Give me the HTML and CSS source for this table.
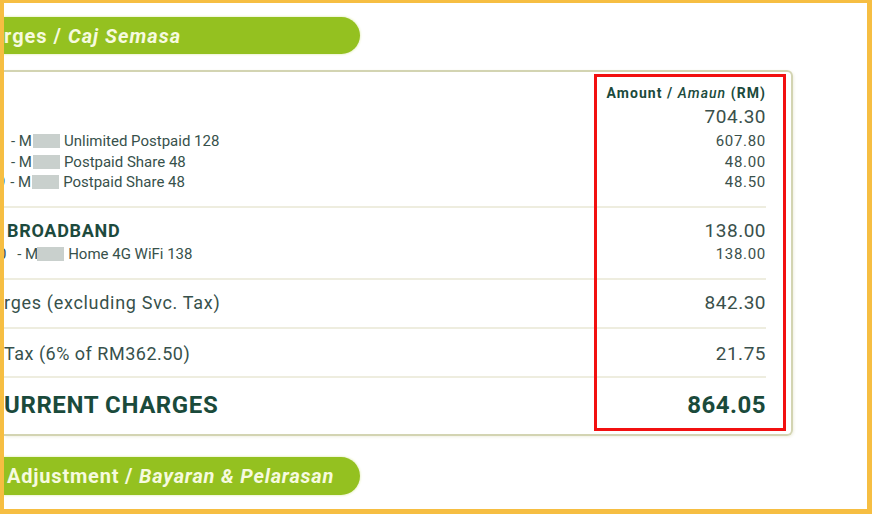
FILE: index.html
```html
<!DOCTYPE html>
<html>
<head>
<meta charset="utf-8">
<link rel="stylesheet" href="styles.css">
</head>
<body>
<div class="frame">
  <div class="pill pill-top"><span class="pill-text">rges / <em>Caj Semasa</em></span></div>
  <div class="card">
    <section class="sec sec1">
      <div class="row hdr"><span class="lbl"></span><span class="amt">Amount / <em>Amaun</em> (RM)</span></div>
      <div class="row main"><span class="lbl"></span><span class="amt big">704.30</span></div>
      <div class="row item"><span class="lbl"><span class="pre">- M</span><i class="redact"></i>Unlimited Postpaid 128</span><span class="amt">607.80</span></div>
      <div class="row item"><span class="lbl"><span class="pre">- M</span><i class="redact"></i>Postpaid Share 48</span><span class="amt">48.00</span></div>
      <div class="row item"><span class="lbl"><span class="pre"><span class="cut">9</span> - M</span><i class="redact"></i>Postpaid Share 48</span><span class="amt">48.50</span></div>
    </section>
    <div class="rule"></div>
    <section class="sec sec2">
      <div class="row main"><span class="lbl title">BROADBAND</span><span class="amt big">138.00</span></div>
      <div class="row item"><span class="lbl"><span class="pre"><span class="cut">0</span> - M</span><i class="redact"></i>Home 4G WiFi 138</span><span class="amt">138.00</span></div>
    </section>
    <div class="rule"></div>
    <section class="sec sec3">
      <div class="row main"><span class="lbl plain sp1">rges (excluding Svc. Tax)</span><span class="amt big">842.30</span></div>
    </section>
    <div class="rule"></div>
    <section class="sec sec4">
      <div class="row main"><span class="lbl plain sp2">Tax (6% of RM362.50)</span><span class="amt big">21.75</span></div>
    </section>
    <div class="rule"></div>
    <section class="sec sec5">
      <div class="row total"><span class="lbl">URRENT CHARGES</span><span class="amt">864.05</span></div>
    </section>
  </div>
  <div class="pill pill-bottom"><span class="pill-text">Adjustment / <em>Bayaran &amp; Pelarasan</em></span></div>
  <div class="mark"></div>
</div>
</body>
</html>
```
FILE: styles.css
```css
* { box-sizing: border-box; }
html, body { margin: 0; padding: 0; }
body {
  background: #f6be42;
  width: 872px;
  height: 514px;
  overflow: hidden;
  font-family: Roboto, "Liberation Sans", sans-serif;
}
.frame {
  position: relative;
  margin: 3px 5px 5px 4px;
  height: 506px;
  background: #ffffff;
  overflow: hidden;
  padding-top: 14px;
}
.pill {
  width: 356px;
  height: 37px;
  background: #94c120;
  border-radius: 0 19px 19px 0;
  display: flex;
  align-items: center;
  box-shadow: 0 0 2px 1px #eef5d2;
}
.pill-text {
  color: #f6fadf;
  font-weight: 700;
  font-size: 20px;
  letter-spacing: 1px;
  padding-left: 0;
}
.pill-text em { font-style: italic; }
.pill-bottom {
  margin-top: 21px;
  height: 38px;
}
.pill-bottom .pill-text { padding-left: 3px; letter-spacing: 0.8px; }
.card {
  margin-top: 16px;
  width: 789px;
  height: 366px;
  border: 2px solid #d3d4b2;
  border-left: none;
  border-radius: 0 6px 6px 0;
  padding-right: 25px;
  box-shadow: 1px 1px 3px #f0f0e2;
}
.row {
  display: flex;
  justify-content: space-between;
  align-items: center;
}
.lbl { color: #37514b; white-space: nowrap; }
.amt { color: #3a504b; text-align: right; }
.sec1 { padding: 13px 0 13px; }
.hdr { height: 16px; margin-bottom: 4px; }
.hdr .amt {
  font-size: 14px;
  font-weight: 700;
  color: #1b4a3c;
  letter-spacing: 1.05px;
}
.hdr em { font-style: italic; font-weight: 500; }
.main { height: 22px; }
.sec1 .main { margin-bottom: 4px; }
.big { font-size: 19px; letter-spacing: 0.5px; }
.item { height: 20.5px; }
.item .lbl { font-size: 15px; }
.item .amt { font-size: 15px; letter-spacing: 0.7px; }
.pre { display: inline-block; }
.cut { display: inline-block; }
.sec1 .item:nth-child(3) .pre,
.sec1 .item:nth-child(4) .pre { padding-left: 7px; }
.sec1 .item:nth-child(5) .pre { margin-left: -7px; }
.sec1 .item:nth-child(5) .cut { margin-right: 1px; }
.sec2 .item .pre { margin-left: -6px; }
.sec2 .item .cut { margin-right: 7px; }
.redact {
  display: inline-block;
  width: 27px;
  height: 14px;
  background: #c9d0cd;
  vertical-align: -2px;
  margin: 0 4px 0 1px;
}
.sec2 .redact { margin-left: -1px; }
.rule { height: 2px; background: #eeeddf; }
.sec2 { padding: 12px 0 14px; }
.sec2 .main { margin-bottom: 2px; }
.title {
  font-size: 18px;
  font-weight: 700;
  color: #1d4a3d;
  padding-left: 3px;
  letter-spacing: 0.7px;
}
.plain { font-size: 18px; }
.sp1 { letter-spacing: 0.7px; }
.sp2 { letter-spacing: 0.5px; }
.sec3 { padding: 11px 0 14px; }
.sec4 { padding: 13px 0 12px; }
.sec5 { padding: 13px 0 15px; }
.total { height: 28px; }
.total .lbl, .total .amt {
  font-size: 24px;
  font-weight: 700;
  color: #1a4a3b;
}
.total .lbl { letter-spacing: 0.6px; }
.total .amt { letter-spacing: 0.5px; }
.mark {
  position: absolute;
  left: 590px;
  top: 71px;
  width: 192px;
  height: 357px;
  border: 3px solid #f21010;
}
```
